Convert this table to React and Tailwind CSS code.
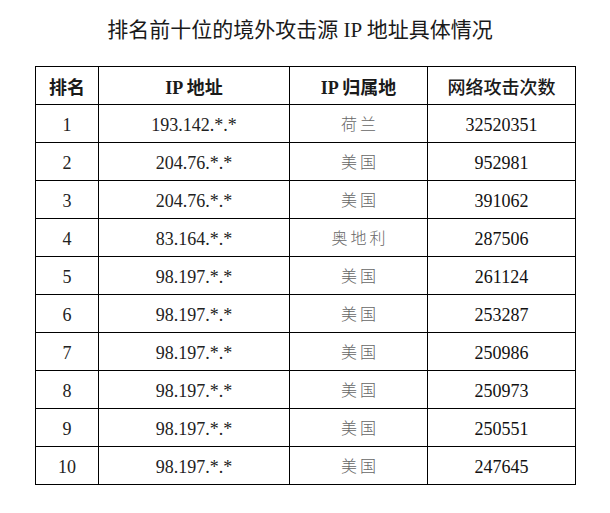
import React from "react";

const rows = [
  ["1", "193.142.*.*", "荷兰", "32520351"],
  ["2", "204.76.*.*", "美国", "952981"],
  ["3", "204.76.*.*", "美国", "391062"],
  ["4", "83.164.*.*", "奥地利", "287506"],
  ["5", "98.197.*.*", "美国", "261124"],
  ["6", "98.197.*.*", "美国", "253287"],
  ["7", "98.197.*.*", "美国", "250986"],
  ["8", "98.197.*.*", "美国", "250973"],
  ["9", "98.197.*.*", "美国", "250551"],
  ["10", "98.197.*.*", "美国", "247645"],
];

const serif = "font-['Liberation_Serif','Noto_Sans_CJK_SC',serif]";

export default function App() {
  return (
    <div className="w-[610px] h-[513px] bg-white overflow-hidden">
      <div className="pt-[14px] pr-[10px] text-center text-[21px] leading-[32px] text-[#1a1a1a] font-['Liberation_Serif','Noto_Sans_CJK_SC',serif]">
        排名前十位的境外攻击源 IP 地址具体情况
      </div>
      <div className="pl-[35px] pt-[20px]">
        <table className={`border-collapse table-fixed ${serif}`}>
          <colgroup>
            <col className="w-[63px]" />
            <col className="w-[191px]" />
            <col className="w-[138px]" />
            <col className="w-[148px]" />
          </colgroup>
          <thead>
            <tr className="h-[38px]">
              <th className="border border-black p-0 pt-[5px] text-center text-[18px] font-bold text-[#1a1a1a]">排名</th>
              <th className="border border-black p-0 pt-[5px] text-center text-[18px] font-bold text-[#1a1a1a]">IP 地址</th>
              <th className="border border-black p-0 pt-[5px] text-center text-[18px] font-bold text-[#1a1a1a]">IP 归属地</th>
              <th className="border border-black p-0 pt-[5px] text-center text-[18px] font-medium text-[#1a1a1a]">网络攻击次数</th>
            </tr>
          </thead>
          <tbody>
            {rows.map((r) => (
              <tr key={r[0]} className="h-[38px]">
                <td className="border border-black p-0 pt-[3px] text-center text-[18px] text-[#222]">{r[0]}</td>
                <td className="border border-black p-0 pt-[3px] text-center text-[18px] text-[#222]">{r[1]}</td>
                <td className="border border-black p-0 pt-[3px] text-center text-[16px] tracking-[3px] pl-[3px] text-[#666] font-light">{r[2]}</td>
                <td className="border border-black p-0 pt-[3px] text-center text-[18px] text-[#111]">{r[3]}</td>
              </tr>
            ))}
          </tbody>
        </table>
      </div>
    </div>
  );
}
